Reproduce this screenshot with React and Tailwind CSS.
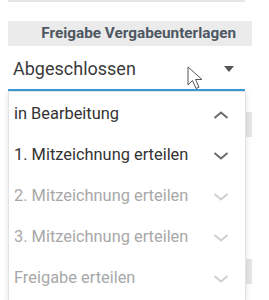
const items = [
  { label: 'in Bearbeitung', state: 'open', active: true },
  { label: '1. Mitzeichnung erteilen', state: 'closed', active: true },
  { label: '2. Mitzeichnung erteilen', state: 'closed', active: false },
  { label: '3. Mitzeichnung erteilen', state: 'closed', active: false },
  { label: 'Freigabe erteilen', state: 'closed', active: false },
]

function Chevron({ up, active }) {
  return (
    <svg width="16" height="8" viewBox="0 0 16 8" className={active ? 'text-[#6b6b6b]' : 'text-[#cfcfcf]'}>
      <path
        d={up ? 'M1.5 7 L8 1.5 L14.5 7' : 'M1.5 1 L8 6.5 L14.5 1'}
        fill="none"
        stroke="currentColor"
        strokeWidth="2"
      />
    </svg>
  )
}

function Cursor() {
  return (
    <svg width="17" height="24" viewBox="0 0 17 24" className="absolute left-[187px] top-[66px]">
      <path
        d="M1 1 L1 19 L5.5 14.5 L9 22.5 L12 21.2 L8.6 13.5 L15 13.5 Z"
        fill="#fff"
        stroke="#555"
        strokeWidth="1"
        strokeLinejoin="round"
      />
    </svg>
  )
}

export default function App() {
  return (
    <div className="relative w-[269px] h-[300px] bg-white overflow-hidden font-['Roboto',sans-serif] pl-2">
      <div className="w-[237px] h-[2px] bg-[#e6e6e6]" />

      {/* section header */}
      <div className="mt-[19px] w-[244px] h-[25px] bg-[#ebebeb] flex items-center justify-end pr-4">
        <span className="text-[15.3px] font-bold text-[#4e5862] leading-none">Freigabe Vergabeunterlagen</span>
      </div>

      {/* select */}
      <div className="relative w-[237px]">
        <div className="h-[45px] border-b-2 border-[#3a9bd5] flex items-center justify-between pl-[5px] pr-[11px] pt-[2px]">
          <span className="text-[18px] text-[#3a3a3a]">Abgeschlossen</span>
          <div className="w-0 h-0 border-l-[5px] border-r-[5px] border-t-[6px] border-l-transparent border-r-transparent border-t-[#555]" />
        </div>

        {/* open menu */}
        <div className="absolute left-0 top-full z-10 w-[238px] h-[210px] bg-white border border-[#e3e3e3] shadow-[0_2px_6px_rgba(0,0,0,0.12)] pt-[2px]">
          {items.map((it) => (
            <div key={it.label} className="h-[41px] flex items-center justify-between pl-[5px] pr-[16px]">
              <span className={`text-[16.4px] ${it.active ? 'text-[#333]' : 'text-[#a8a8a8]'}`}>{it.label}</span>
              <Chevron up={it.state === 'open'} active={it.active} />
            </div>
          ))}
        </div>
      </div>

      {/* page content covered by the menu */}
      <div className="mt-[21px] flex flex-col gap-[122px]">
        <div className="w-[244px] h-[25px] bg-[#e6e6e6]" />
        <div className="w-[244px] h-[25px] bg-[#e6e6e6]" />
      </div>

      <Cursor />
    </div>
  )
}
